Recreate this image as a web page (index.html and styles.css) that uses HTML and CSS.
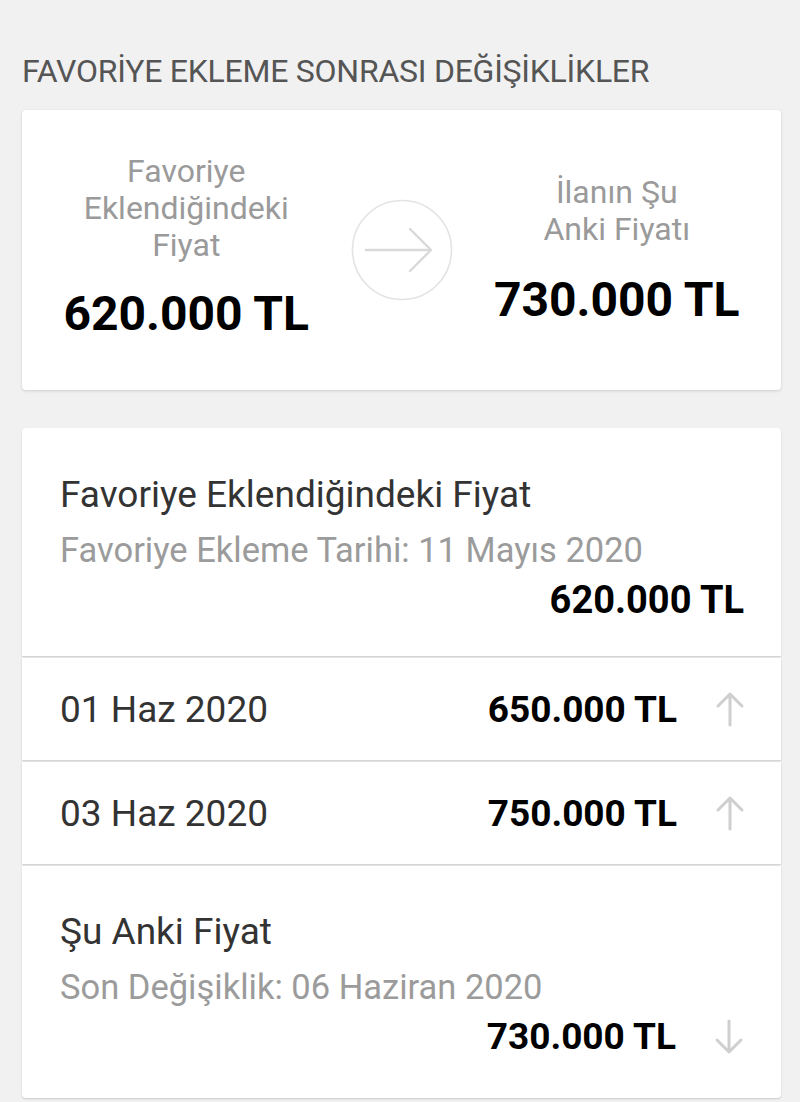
FILE: index.html
```html
<!DOCTYPE html>
<html lang="tr">
<head>
    <meta charset="UTF-8">
    <meta name="viewport" content="width=device-width, initial-scale=1.0">
    <title>Favoriye Ekleme Sonrası Değişiklikler</title>
    <link rel="stylesheet" href="styles.css">
</head>
<body>
    <h1 class="page-title">FAVORİYE EKLEME SONRASI DEĞİŞİKLİKLER</h1>

    <div class="summary-card">
        <div class="summary-col left">
            <div class="summary-label">Favoriye<br>Eklendiğindeki<br>Fiyat</div>
            <div class="summary-price">620.000 TL</div>
        </div>
        <div class="summary-arrow">
            <svg width="102" height="102" viewBox="0 0 102 102">
                <circle cx="51" cy="51" r="49.5" fill="none" stroke="#e3e3e3" stroke-width="1.6"/>
                <path d="M15 51 H80 M59 30 L80 51 L59 72" fill="none" stroke="#d9d9d9" stroke-width="2.4" stroke-linecap="round" stroke-linejoin="round"/>
            </svg>
        </div>
        <div class="summary-col right">
            <div class="summary-label">İlanın Şu<br>Anki Fiyatı</div>
            <div class="summary-price">730.000 TL</div>
        </div>
    </div>

    <div class="history">
        <div class="history-block">
            <div class="block-title">Favoriye Eklendiğindeki Fiyat</div>
            <div class="block-sub">Favoriye Ekleme Tarihi: 11 Mayıs 2020</div>
            <div class="block-price">620.000 TL</div>
        </div>

        <div class="history-row">
            <span class="row-date">01 Haz 2020</span>
            <span class="row-price">650.000 TL</span>
            <svg class="trend" width="30" height="36" viewBox="0 0 30 36">
                <path d="M15 34 V3 M3 15 L15 3 L27 15" fill="none" stroke="#cfcfcf" stroke-width="3" stroke-linecap="round" stroke-linejoin="round"/>
            </svg>
        </div>

        <div class="history-row">
            <span class="row-date">03 Haz 2020</span>
            <span class="row-price">750.000 TL</span>
            <svg class="trend" width="30" height="36" viewBox="0 0 30 36">
                <path d="M15 34 V3 M3 15 L15 3 L27 15" fill="none" stroke="#cfcfcf" stroke-width="3" stroke-linecap="round" stroke-linejoin="round"/>
            </svg>
        </div>

        <div class="history-block last">
            <div class="block-title">Şu Anki Fiyat</div>
            <div class="block-sub">Son Değişiklik: 06 Haziran 2020</div>
            <div class="block-price with-trend">
                <span>730.000 TL</span>
                <svg class="trend" width="30" height="36" viewBox="0 0 30 36">
                    <path d="M15 2 V33 M3 21 L15 33 L27 21" fill="none" stroke="#cfcfcf" stroke-width="3" stroke-linecap="round" stroke-linejoin="round"/>
                </svg>
            </div>
        </div>
    </div>
</body>
</html>
```

FILE: styles.css
```css
* {
    margin: 0;
    padding: 0;
    box-sizing: border-box;
}

body {
    font-family: Roboto, "Noto Sans", sans-serif;
    background: #f1f1f1;
    color: #333;
    padding: 0 19px 0 22px;
    width: 800px;
    height: 1102px;
    overflow: hidden;
}

.page-title {
    font-size: 32px;
    font-weight: 400;
    color: #555;
    line-height: 34px;
    padding-top: 54px;
    margin-bottom: 22px;
    letter-spacing: -0.25px;
}

.summary-card {
    background: #fff;
    border-radius: 4px;
    box-shadow: 0 1px 3px rgba(0, 0, 0, 0.15);
    height: 280px;
    display: grid;
    grid-template-columns: 1fr auto 1fr;
    align-items: center;
    padding: 0 20px;
}

.summary-col {
    display: flex;
    flex-direction: column;
    align-items: center;
    text-align: center;
}

.summary-col.left {
    margin-bottom: 8px;
}

.summary-label {
    font-size: 32px;
    line-height: 37px;
    color: #9a9a9a;
}

.summary-col .summary-label {
    margin-bottom: 24px;
}

.summary-col.right .summary-label {
    margin-bottom: 26px;
}

.summary-price {
    font-size: 48px;
    font-weight: 700;
    color: #000;
    line-height: 52px;
}

.summary-arrow {
    display: flex;
    justify-content: center;
    padding: 0 20px;
}

.history {
    margin-top: 38px;
}

.history-block,
.history-row {
    background: #fff;
    box-shadow: 0 1px 2px rgba(0, 0, 0, 0.16);
    margin-bottom: 2px;
}

.history-block {
    border-radius: 4px 4px 0 0;
    height: 228px;
    padding: 38px 37px 0 38px;
}

.history-block.last {
    border-radius: 0 0 4px 4px;
    height: 232px;
    padding-top: 37px;
}

.block-title {
    font-size: 37px;
    line-height: 57px;
    color: #333;
}

.block-sub {
    font-size: 34.5px;
    line-height: 54px;
    color: #9b9b9b;
}

.block-price {
    font-size: 38px;
    font-weight: 700;
    color: #000;
    line-height: 46px;
    text-align: right;
}

.block-price.with-trend {
    display: flex;
    justify-content: flex-end;
    align-items: center;
    gap: 38px;
    font-size: 37px;
}

.history-row {
    height: 102px;
    display: flex;
    align-items: center;
    padding: 0 36px 0 38px;
}

.row-date {
    font-size: 37px;
    color: #333;
    flex: 1;
}

.row-price {
    font-size: 37px;
    font-weight: 700;
    color: #000;
    margin-right: 38px;
}

.trend {
    display: block;
}
```
